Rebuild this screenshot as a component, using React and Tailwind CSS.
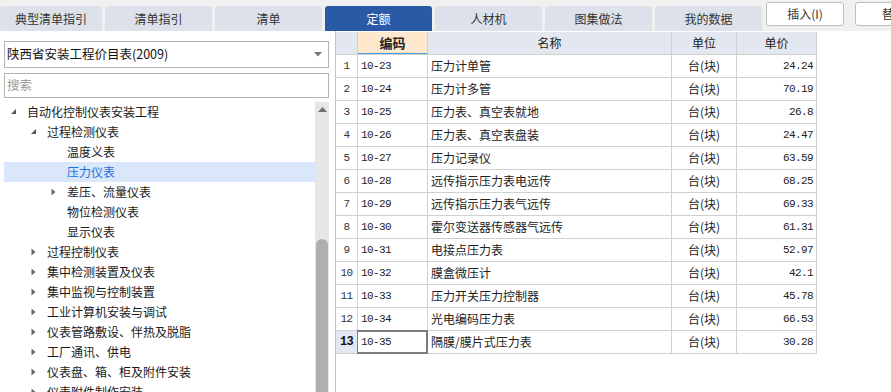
import React from "react";

const tabs = ["典型清单指引", "清单指引", "清单", "定额", "人材机", "图集做法", "我的数据"];

const tree = [
  { l: 0, t: "自动化控制仪表安装工程", e: "open" },
  { l: 1, t: "过程检测仪表", e: "open" },
  { l: 2, t: "温度义表" },
  { l: 2, t: "压力仪表", sel: true },
  { l: 2, t: "差压、流量仪表", e: "closed" },
  { l: 2, t: "物位检测仪表" },
  { l: 2, t: "显示仪表" },
  { l: 1, t: "过程控制仪表", e: "closed" },
  { l: 1, t: "集中检测装置及仪表", e: "closed" },
  { l: 1, t: "集中监视与控制装置", e: "closed" },
  { l: 1, t: "工业计算机安装与调试", e: "closed" },
  { l: 1, t: "仪表管路敷设、伴热及脱脂", e: "closed" },
  { l: 1, t: "工厂通讯、供电", e: "closed" },
  { l: 1, t: "仪表盘、箱、柜及附件安装", e: "closed" },
  { l: 1, t: "仪表附件制作安装", e: "closed" },
];

const rows = [
  ["10-23", "压力计单管", "24.24"],
  ["10-24", "压力计多管", "70.19"],
  ["10-25", "压力表、真空表就地", "26.8"],
  ["10-26", "压力表、真空表盘装", "24.47"],
  ["10-27", "压力记录仪", "63.59"],
  ["10-28", "远传指示压力表电远传", "68.25"],
  ["10-29", "远传指示压力表气远传", "69.33"],
  ["10-30", "霍尔变送器传感器气远传", "61.31"],
  ["10-31", "电接点压力表", "52.97"],
  ["10-32", "膜盒微压计", "42.1"],
  ["10-33", "压力开关压力控制器", "45.78"],
  ["10-34", "光电编码压力表", "66.53"],
  ["10-35", "隔膜/膜片式压力表", "30.28"],
];

const padByLevel = ["pl-[1px]", "pl-[21px]", "pl-[41px]"];

function Tri({ e }) {
  if (e === "open")
    return (
      <svg className="shrink-0" width="16" height="20" viewBox="0 0 16 20">
        <path d="M11 7 L11 12 L6 12 Z" fill="#555" />
      </svg>
    );
  if (e === "closed")
    return (
      <svg className="shrink-0" width="16" height="20" viewBox="0 0 16 20">
        <path d="M6.5 6.5 L10.5 10 L6.5 13.5 Z" fill="#666" />
      </svg>
    );
  return <span className="w-4 shrink-0" />;
}

export default function App() {
  return (
    <div className="w-[891px] h-[392px] overflow-hidden bg-white text-[12px] text-[#222] font-['Noto_Sans_CJK_SC','Noto_Sans',sans-serif] flex flex-col">
      {/* top bar */}
      <div className="h-[31px] shrink-0 bg-[#f0f0f0] flex items-start overflow-hidden">
        <div className="flex shrink-0 gap-[3px] pt-[6px]">
          {tabs.map((t, i) => (
            <div
              key={t}
              className={
                (i === 0 ? "w-[102px] " : "w-[107px] ") +
                (i === 3
                  ? "bg-[#2a5aa6] text-white "
                  : "bg-[#dce1ea] text-[#333] ") +
                "h-[25px] shrink-0 rounded-t-[3px] flex items-center justify-center leading-none"
              }
            >
              {t}
            </div>
          ))}
        </div>
        <div className="ml-[4px] mt-[2px] w-[78px] shrink-0 h-[24px] bg-white border border-[#bdbdbd] rounded-[3px] flex items-center justify-center text-[#333] whitespace-nowrap">
          插入(I)
        </div>
        <div className="ml-[11px] mt-[2px] w-[78px] shrink-0 h-[24px] bg-white border border-[#bdbdbd] rounded-[3px] flex items-center justify-center text-[#333] whitespace-nowrap">
          替换
        </div>
      </div>

      {/* body */}
      <div className="flex flex-1 min-h-0">
        {/* left panel */}
        <div className="w-[330px] shrink-0 pl-[4px] pr-[1px] pt-[10px] flex flex-col">
          <div className="h-[27px] shrink-0 border border-[#b4b4b4] flex items-center justify-between pl-[2px] pr-[6px] text-[12.5px] text-[#111]">
            <span>陕西省安装工程价目表(2009)</span>
            <svg width="8" height="5" viewBox="0 0 8 5">
              <path d="M0 0 L8 0 L4 4.5 Z" fill="#777" />
            </svg>
          </div>
          <div className="mt-[5px] h-[25px] shrink-0 border border-[#b4b4b4] flex items-center pl-[2px] text-[#9a9a9a] text-[12.5px]">
            搜索
          </div>
          <div className="mt-[4px] flex flex-1 min-h-0">
            <div className="w-[311px] flex flex-col overflow-hidden">
              {tree.map((r, i) => (
                <div
                  key={i}
                  className={
                    "h-[20px] shrink-0 flex items-center " +
                    padByLevel[r.l] +
                    (r.sel ? " bg-[#dae7fb] text-[#2470d8]" : " text-[#1a1a1a]")
                  }
                >
                  <Tri e={r.e} />
                  <span className="ml-[6px] text-[12px] leading-none whitespace-nowrap">{r.t}</span>
                </div>
              ))}
            </div>
            <div className="w-[14px] bg-[#e5e6e8] flex flex-col items-center">
              <svg className="mt-[5px]" width="9" height="5" viewBox="0 0 9 5">
                <path d="M0 5 L9 5 L4.5 0 Z" fill="#707070" />
              </svg>
              <div className="mt-[127px] w-[12px] flex-1 bg-[#adafb3] rounded-t-[6px]" />
            </div>
          </div>
        </div>

        {/* right panel */}
        <div className="ml-[5px] flex-1 border-l border-[#c4c4c4] pt-[1px]">
          <div className="w-[481px]">
            <div className="flex h-[23px] bg-[#e3e8f0] border-b border-[#d0d0d0]">
              <div className="w-[22px] border-r border-[#d0d0d0]" />
              <div className="w-[70px] border-r border-[#d0d0d0] bg-[#fde8cd] border-b border-b-[#4b9ae6] flex items-center justify-center font-bold text-[13px]">
                编码
              </div>
              <div className="w-[244px] border-r border-[#d0d0d0] flex items-center justify-center">名称</div>
              <div className="w-[65px] border-r border-[#d0d0d0] flex items-center justify-center">单位</div>
              <div className="w-[80px] border-r border-[#d0d0d0] flex items-center justify-center">单价</div>
            </div>
            {rows.map((r, i) => {
              const last = i === rows.length - 1;
              return (
                <div key={i} className="flex h-[23px] border-b border-[#d0d0d0]">
                  <div
                    className={
                      "w-[22px] border-r flex items-center justify-center font-['Liberation_Mono',monospace] tracking-[-0.6px] text-[11px] " +
                      (last
                        ? "bg-[#e2e7f1] font-bold text-[12px] text-[#111] border-[#3d8ce8]"
                        : "border-[#d0d0d0] text-[#333]")
                    }
                  >
                    {i + 1}
                  </div>
                  <div className="relative w-[70px] border-r border-[#d0d0d0] flex items-center pl-[3px] font-['Liberation_Mono',monospace] text-[11px] tracking-[-0.6px]">
                    {r[0]}
                    {last && <div className="absolute -top-px -left-px -right-px -bottom-px border-2 border-[#7c7c7c] border-l-0" />}
                  </div>
                  <div className="w-[244px] border-r border-[#d0d0d0] flex items-center pl-[3px]">{r[1]}</div>
                  <div className="w-[65px] border-r border-[#d0d0d0] flex items-center justify-center">台(块)</div>
                  <div className="w-[80px] border-r border-[#d0d0d0] flex items-center justify-end pr-[3px] font-['Liberation_Mono',monospace] text-[11px] tracking-[-0.6px]">
                    {r[2]}
                  </div>
                </div>
              );
            })}
          </div>
        </div>
      </div>
    </div>
  );
}
